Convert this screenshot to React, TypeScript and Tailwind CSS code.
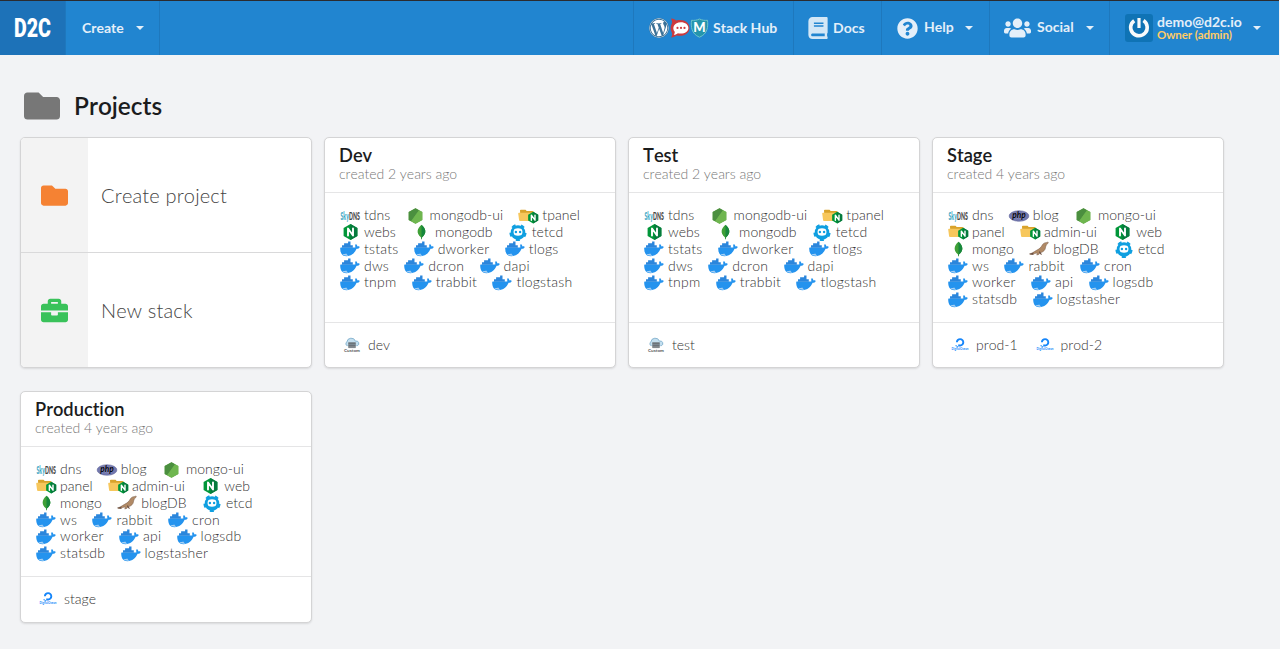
import React from "react";
import { FaBook, FaBriefcase, FaFolder, FaQuestionCircle, FaUsers, FaWordpress } from "react-icons/fa";

type IconKind = "sky" | "node" | "panel" | "nginx" | "mongo" | "etcd" | "docker" | "php" | "maria";

function NginxShape() {
  return (
    <>
      <path d="M7.5 0 14.4 3.9v8L7.5 16 .6 12V3.9Z" fill="#019639" />
      <path d="M7.5 0 14.4 3.9v8L7.5 16Z" fill="#067a3d" />
      <path d="M5 11.5v-7l5 7v-7" fill="none" stroke="#fff" strokeWidth="1.9" strokeLinejoin="round" strokeLinecap="round" />
    </>
  );
}

function ServiceIcon({ kind }: { kind: IconKind }) {
  switch (kind) {
    case "sky":
      return (
        <svg width="20" height="16" viewBox="0 0 20 16" className="overflow-visible">
          <defs>
            <linearGradient id="sky-two-tone">
              <stop offset="46%" stopColor="#3fa6c4" />
              <stop offset="46%" stopColor="#444" />
            </linearGradient>
          </defs>
          <text transform="translate(.5 11.500) scale(.47 1)" fontFamily="Lato, sans-serif" fontSize="11.500" fontWeight="900" textLength="41" lengthAdjust="spacingAndGlyphs" fill="url(#sky-two-tone)">SkyDNS</text>
        </svg>
      );
    case "node":
      return (
        <svg width="15" height="16" viewBox="0 0 15 16">
          <path d="M7.5.2 14.3 4v8L7.5 15.8.7 12V4Z" fill="#62a84a" />
          <path d="M7.5.2.7 4v8l2.4 1.3L11 2.2Z" fill="#4b8f3f" />
          <path d="M11 2.2 14.3 4v8l-6.8 3.8-4.4-2.5Z" fill="#6fb64f" />
        </svg>
      );
    case "nginx":
      return (
        <svg width="15" height="16" viewBox="0 0 15 16">
          <NginxShape />
        </svg>
      );
    case "panel":
      return (
        <svg width="20" height="16" viewBox="0 0 20 16" className="overflow-visible">
          <path d="M2 2.600q0-.9.9-.9h4.600l1.200 1.300h5.800q1 0 1 1v7.900H2.500Z" fill="#d9a32c" />
          <path d="M.2 5.600q-.1-.9.8-.9h12.800q1 0 1 .9l.6 6.900q0 .6-.8.6H2q-.8 0-.9-.8Z" fill="#f7c75c" />
          <g transform="translate(9.700 3.800) scale(.73)">
            <NginxShape />
          </g>
        </svg>
      );
    case "mongo":
      return (
        <svg width="15" height="16" viewBox="0 0 15 16">
          <path d="M7.500.8C3.100 4.500 1.900 9 6.900 13.300l.3 1.900h.6l.3-1.900C13.100 9 11.900 4.500 7.500.8Z" fill="#3fa037" />
          <path d="M7.500.8c4.400 3.700 5.600 8.200.6 12.500l-.3 1.900h-.3Z" fill="#17873c" />
        </svg>
      );
    case "etcd":
      return (
        <svg width="18" height="17" viewBox="0 0 18 17" className="shrink-0 overflow-visible">
          <circle cx="9" cy="8.500" r="7.300" fill="#0f9fe0" />
          <circle cx="9" cy="8.500" r="7.600" fill="none" stroke="#0f9fe0" strokeWidth="2" strokeDasharray="4 5.550" strokeDashoffset="2" transform="rotate(-54 9 8.500)" />
          <path d="M5.500 5Q9 3.400 12.500 5 14.500 8 12.500 11 9 12.600 5.500 11 3.500 8 5.500 5Z" fill="#fff" />
          <circle cx="6.900" cy="8" r="1.200" fill="#0f9fe0" />
          <circle cx="11.100" cy="8" r="1.200" fill="#0f9fe0" />
        </svg>
      );
    case "php":
      return (
        <svg width="20" height="16" viewBox="0 0 20 16" className="overflow-visible">
          <ellipse cx="10" cy="8" rx="9.900" ry="5.300" fill="#7378ae" stroke="#555b95" strokeWidth=".5" />
          <text x="3.300" y="10" fontFamily="Lato, sans-serif" fontStyle="italic" fontSize="8.500" fontWeight="900" textLength="13.500" lengthAdjust="spacingAndGlyphs" fill="#0b0b16" stroke="#b9bbd8" strokeWidth=".3" paintOrder="stroke">php</text>
        </svg>
      );
    case "maria":
      return (
        <svg width="20" height="16" viewBox="0 0 20 16">
          <path d="M19.300 1.300c-.5-.4-1.500.2-2.800.4-2.100.2-2.900 1.800-4 3.600C11 7.700 8.500 8.800 6.300 10 4.300 11.200 3 12.400.5 12.900c1.300.9 3.600.5 5.300-.4.8-.4 1.800-.5 2.800-.1L7.700 14l2.300-.7 1.200-1.500c1.800-.3 3.700-1.500 4.700-3.200.8-1.500.5-3.200 1.600-4.800.5-.7 1.500-1.100 1.800-2.500Z" fill="#b18a66" stroke="#765a49" strokeWidth=".5" />
          <path d="m10.800 10.300 2.300 3.400-1.500-.3-1.800-2.400ZM.5 12.900l4.600-1.700-1.300 1.600 1 1.100Z" fill="#694f43" />
        </svg>
      );
    default:
      return (
        <svg width="20" height="16" viewBox="0 0 20 16">
          <path d="M.2 7.500q-.2-.9.700-.9h13c.7 0 1.200-.1 1.600-.4-.6-1.200-.4-2.300.4-3.200.9.600 1.400 1.500 1.400 2.400.9-.1 1.800 0 2.500.5-.5 1.200-1.600 1.900-3.200 1.900C14.800 12 11.400 15.200 6.400 15.200 2.400 15.200.2 12.600.2 7.500Z" fill="#2493ee" />
          <path d="M2 6.800V4.200h2.100V2.300h4V.5h2.400v3.700h2.300v2.600Z" fill="#2b86dc" />
          <path d="M2.500 13c1.500.2 2.800 0 3.700-.6.5 1 1.200 1.600 2.200 2-2.300.7-4.500.2-5.900-1.400Z" fill="#a5d0f5" />
        </svg>
      );
  }
}

function CloudIcon({ custom }: { custom: boolean }) {
  if (custom) {
    return (
      <svg width="16" height="16" viewBox="0 0 16 16" className="overflow-visible">
        <path d="M3.500 8.700H2.900A2.300 2.300 0 0 1 2.800 5 4.500 4.500 0 0 1 11.500 4.200a2.300 2.300 0 0 1 1.800 4.500h-.9" fill="#c4dfef" stroke="#75a8c8" strokeWidth=".8" />
        <path d="M4.500 5.600h7v1.500h-7Zm0 1.800h7v1.500h-7Zm0 1.800h7v1.500h-7Z" fill="#737a80" stroke="#60686d" strokeWidth=".4" />
        <text x="0" y="14.500" fontSize="4.200" fontWeight="700" textLength="16" lengthAdjust="spacingAndGlyphs" fill="#555" fontFamily="Lato, sans-serif">Custom</text>
      </svg>
    );
  }
  return (
    <svg width="18" height="16" viewBox="0 0 18 16" className="overflow-visible">
      <path d="M5.900 5.300A3.200 3.200 0 1 1 9 8.500" fill="none" stroke="#1686fa" strokeWidth="1.900" />
      <path d="M7.200 7.600h1.900v1.900H7.200ZM5.600 9.300h1.500v1.300H5.600ZM4.600 8.100h1v1.100h-1Z" fill="#1686fa" />
      <text x=".5" y="13.300" fontSize="3" fontWeight="700" textLength="17" lengthAdjust="spacingAndGlyphs" fill="#1686fa" fontFamily="Lato, sans-serif">DigitalOcean</text>
    </svg>
  );
}

type Service = [IconKind, string];

const demoRows = (): Service[][] => [
  [["sky", "tdns"], ["node", "mongodb-ui"], ["panel", "tpanel"]],
  [["nginx", "webs"], ["mongo", "mongodb"], ["etcd", "tetcd"]],
  [["docker", "tstats"], ["docker", "dworker"], ["docker", "tlogs"]],
  [["docker", "dws"], ["docker", "dcron"], ["docker", "dapi"]],
  [["docker", "tnpm"], ["docker", "trabbit"], ["docker", "tlogstash"]],
];

const liveRows = (): Service[][] => [
  [["sky", "dns"], ["php", "blog"], ["node", "mongo-ui"]],
  [["panel", "panel"], ["panel", "admin-ui"], ["nginx", "web"]],
  [["mongo", "mongo"], ["maria", "blogDB"], ["etcd", "etcd"]],
  [["docker", "ws"], ["docker", "rabbit"], ["docker", "cron"]],
  [["docker", "worker"], ["docker", "api"], ["docker", "logsdb"]],
  [["docker", "statsdb"], ["docker", "logstasher"]],
];

const projects = [
  { name: "Dev", years: 2, rows: demoRows(), hosts: ["dev"], custom: true },
  { name: "Test", years: 2, rows: demoRows(), hosts: ["test"], custom: true },
  { name: "Stage", years: 4, rows: liveRows(), hosts: ["prod-1", "prod-2"], custom: false },
  { name: "Production", years: 4, rows: liveRows(), hosts: ["stage"], custom: false },
];

const cardClass = "flex flex-col overflow-hidden rounded-[5px] border border-[#d4d4d5] bg-white shadow-[0_1px_2px_rgba(34,36,38,0.12)]";

const labelBase = "pb-[2px] text-[14px] leading-[17px] font-light text-[#333]";

function ProjectCard({ project }: { project: (typeof projects)[number] }) {
  return (
    <article className={`${cardClass} w-[292px]`}>
      <header className="h-[55px] border-b border-[#e5e5e6] px-[14px] pt-[7px]">
        <h2 className="text-[18.300px] leading-[21px] font-semibold text-[#1b1c1d]">{project.name}</h2>
        <p className="-mt-px text-[14px] leading-[17px] font-light tracking-[-0.03px] text-[#777]">created {project.years} years ago</p>
      </header>
      <div className="h-[130px] border-b border-[#e5e5e6] pt-[14.300px] pl-[15px]">
        {project.rows.map((row, i) => (
          <div key={i} className="flex h-[16.800px] items-center gap-[15.300px]">
            {row.map(([kind, label]) => (
              <span key={label} className="flex h-full items-center gap-1">
                <span className="flex h-full w-5 items-center justify-center">
                  <ServiceIcon kind={kind} />
                </span>
                <span className={`${labelBase} ${kind === "docker" ? "tracking-[0.220px]" : "tracking-[0.030px]"}`}>{label}</span>
              </span>
            ))}
          </div>
        ))}
      </div>
      <footer className="flex h-[44px] items-center gap-[18px] pl-[18px]">
        {project.hosts.map((host) => (
          <span key={host} className="flex items-center gap-[7px]">
            <span className="flex w-[18px] justify-center">
              <CloudIcon custom={project.custom} />
            </span>
            <span className={labelBase}>{host}</span>
          </span>
        ))}
      </footer>
    </article>
  );
}

function Caret() {
  return (
    <svg width="8" height="4" viewBox="0 0 8 4">
      <path d="M0 0h8L4 4Z" fill="#e4eff9" />
    </svg>
  );
}

function StackLogos() {
  return (
    <span className="flex items-center">
      <FaWordpress className="size-[20px] rounded-full bg-[#3c7298] text-white" />
      <svg width="20" height="20" viewBox="0 0 20 20" className="ml-px">
        <path d="M1 .5c3 .3 4.300 1.200 5.200 2C14 .8 19.500 4.500 19.500 10S14 19 6.200 17.400c-1 .9-2.500 1.700-5.200 2.100 1.200-2 1.400-3.200.8-5C.2 11.500.2 8.500 1.800 5.600 2.300 3.700 1.900 2 1 .5Z" fill="#cc3a3d" />
        <path d="M10.800 4.200c4.400 0 7.600 2.400 7.600 5.700s-3.200 5.700-7.600 5.700c-1 0-2-.1-2.900-.4-.9.8-2.200 1.500-4.200 1.500.8-.9 1.200-1.900 1-2.900C1.400 9.500 4.400 4.200 10.800 4.200Z" fill="#fff" />
        <circle cx="7.500" cy="9.900" r="1.100" fill="#cc3a3d" />
        <circle cx="11" cy="9.900" r="1.100" fill="#cc3a3d" />
        <circle cx="14.500" cy="9.900" r="1.100" fill="#cc3a3d" />
      </svg>
      <svg width="19" height="20" viewBox="0 0 19 20" className="overflow-visible">
        <path d="M9.500 1C6.800 2.400 4 2.500 1.500 2.300.8 8.500 1.200 15.800 9.500 19.200 17.800 15.800 18.200 8.500 17.500 2.300 15 2.500 12.200 2.400 9.500 1Z" fill="#2595ac" stroke="#6cc4ca" strokeWidth="1" />
        <text x="9.500" y="14.200" textAnchor="middle" fontFamily="Lato, sans-serif" fontWeight="900" fontSize="13" fill="#fff">M</text>
      </svg>
    </span>
  );
}

const navItem = "flex h-full items-center border-l border-[#1e78bd] text-[14px] font-bold text-[#e4eff9]";

function TopBar() {
  return (
    <nav className="mr-px flex h-[55px] border-t border-[#2b2b2f] bg-[#2185d0]">
      <a className="flex h-full w-[65px] items-center bg-[#1d72b8] pl-[14px]">
        <svg width="38" height="32" viewBox="0 0 38 32" className="overflow-visible">
          <text x="0" y="25" fontFamily="Roboto, sans-serif" fontWeight="900" fontSize="25" textLength="37" lengthAdjust="spacingAndGlyphs" fill="#fff">D2C</text>
        </svg>
      </a>
      <a className={`${navItem} w-[95px] justify-between border-r pr-[15px] pl-[16px]`}>
        <span className="pb-[2px]">Create</span> <Caret />
      </a>
      <div className="flex-1" />
      <a className={`${navItem} w-[160px] gap-1 pl-[15px]`}>
        <StackLogos />
        <span className="pb-[2px]">Stack Hub</span>
      </a>
      <a className={`${navItem} w-[88px] gap-[5px] pl-[14px]`}>
        <FaBook className="h-[22px] w-[20px] text-[#d3e7f6]" />
        <span className="pb-[2px]">Docs</span>
      </a>
      <a className={`${navItem} w-[108px] pl-[15px]`}>
        <FaQuestionCircle className="mr-[6px] size-[21px]" />
        <span className="pb-[3px]">Help</span>
        <span className="ml-[11px]"><Caret /></span>
      </a>
      <a className={`${navItem} w-[120px] pl-[14px]`}>
        <FaUsers className="mr-[6px] h-[22px] w-[27px]" />
        <span className="pb-[3px]">Social</span>
        <span className="ml-[12px]"><Caret /></span>
      </a>
      <a className={`${navItem} w-[170px] pl-[15px]`}>
        <svg width="28" height="28" viewBox="0 0 28 28">
          <rect width="28" height="28" rx="3" fill="#0f73b5" />
          <path d="M9.200 6.700A8.300 8.300 0 1 0 18.500 6.600" fill="none" stroke="#f8fafb" strokeWidth="3.600" />
          <path d="M14 4v10" stroke="#f8fafb" strokeWidth="3.200" />
        </svg>
        <span className="ml-1 flex flex-col">
          <span className="text-[14px] leading-[13px]">demo@d2c.io</span>
          <span className="text-[11.500px] leading-[13px] tracking-[-0.080px] text-[#ffcc66]">Owner (admin)</span>
        </span>
        <span className="ml-[11px]"><Caret /></span>
      </a>
    </nav>
  );
}

function Action({ icon, label }: { icon: React.ReactNode; label: string }) {
  return (
    <a className="flex flex-1">
      <span className="flex w-[67px] items-center justify-center bg-[#f3f3f3]">{icon}</span>
      <span className="flex items-center pl-[13px] text-[20px] font-light tracking-[0.150px] text-[#444]">{label}</span>
    </a>
  );
}

export default function App() {
  return (
    <div className="h-[649px] overflow-hidden bg-[#f2f3f5] font-[Lato,sans-serif] [font-kerning:none] [font-variant-ligatures:none]">
      <TopBar />
      <main className="pt-[35px] pl-5">
        <h1 className="flex h-[32px] items-center gap-[14px] pl-1 text-[24.400px] font-semibold text-[#1b1c1d]">
          <FaFolder className="size-[36px] text-[#777]" />
          Projects
        </h1>
        <div className="mt-[15px] grid grid-cols-[repeat(4,292px)] grid-rows-[231px_232px] gap-x-3 gap-y-[23px]">
          <section className={`${cardClass} divide-y divide-[#d9d9da]`}>
            <Action icon={<FaFolder className="size-[27px] text-[#f58233]" />} label="Create project" />
            <Action icon={<FaBriefcase className="size-[27px] text-[#39c25a]" />} label="New stack" />
          </section>
          {projects.map((project) => (
            <ProjectCard key={project.name} project={project} />
          ))}
        </div>
      </main>
    </div>
  );
}
